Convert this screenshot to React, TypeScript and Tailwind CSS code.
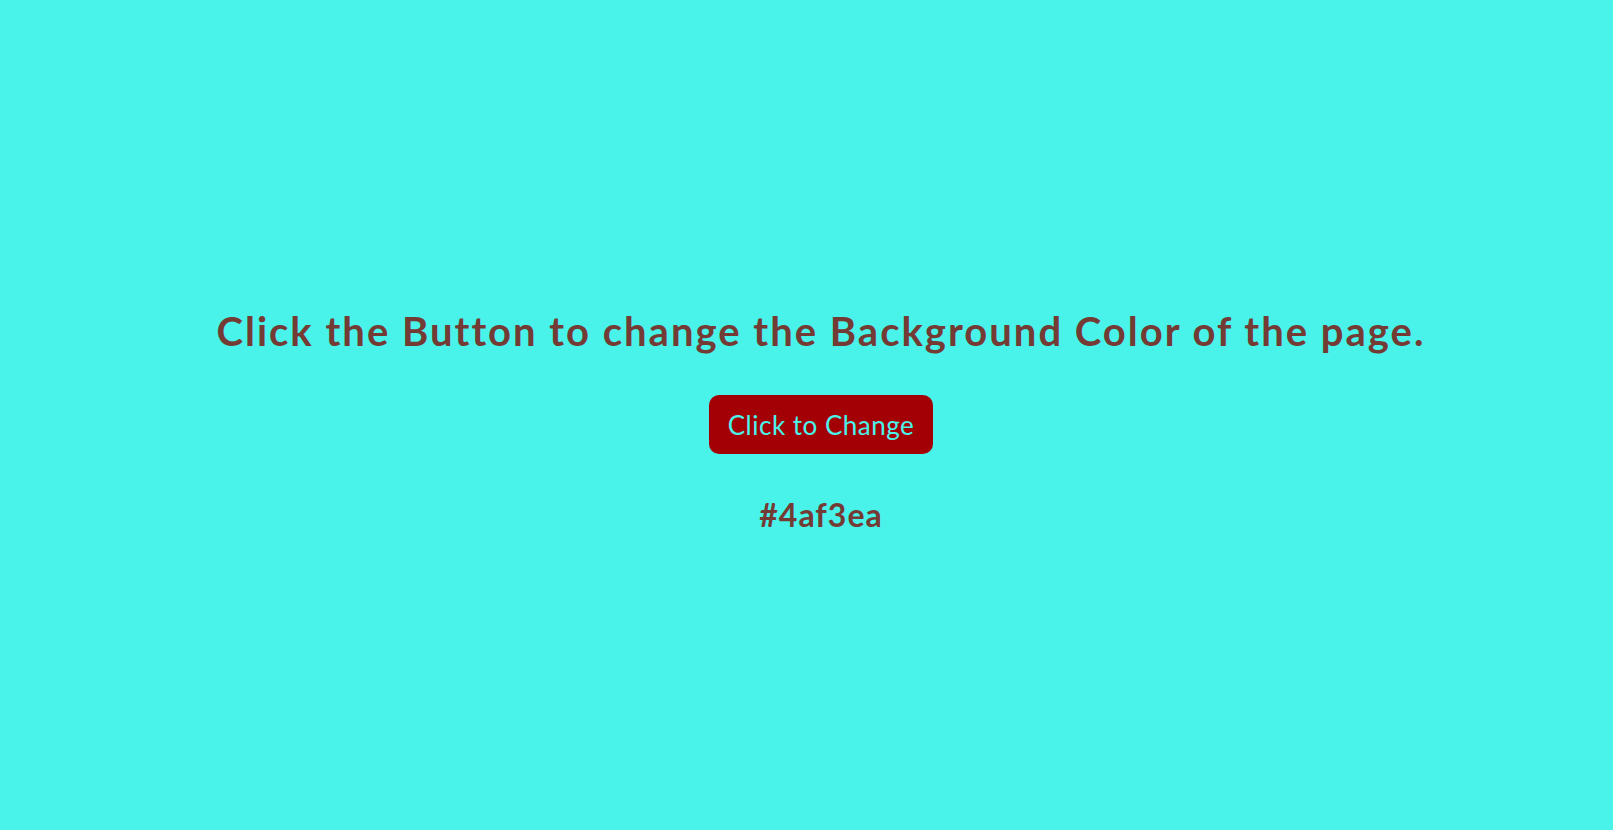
import React, { useState } from "react";

export default function App() {
  const [color, setColor] = useState("#4af3ea");
  const change = () => {
    const hex =
      "#" +
      Math.floor(Math.random() * 0xffffff)
        .toString(16)
        .padStart(6, "0");
    setColor(hex);
  };
  return (
    <div
      className="h-screen w-full flex flex-col items-center justify-center pl-[29px] pt-[10px]"
      style={{ backgroundColor: color, fontFamily: '"Comic Sans MS", Lato, "Open Sans", sans-serif' }}
    >
      <h1 className="text-[40px] font-bold leading-[48px] tracking-[2px] text-[#743b34] m-0">
        Click the Button to change the Background Color of the page.
      </h1>
      <button
        onClick={change}
        className="mt-[40px] w-[224px] h-[59px] rounded-[10px] bg-[#a30006] text-[26px] tracking-[0.5px] leading-none flex items-center justify-center"
        style={{ color }}
      >
        Click to Change
      </button>
      <p className="mt-[43px] text-[32px] font-bold leading-[36px] tracking-[1px] text-[#743b34]">{color}</p>
    </div>
  );
}
